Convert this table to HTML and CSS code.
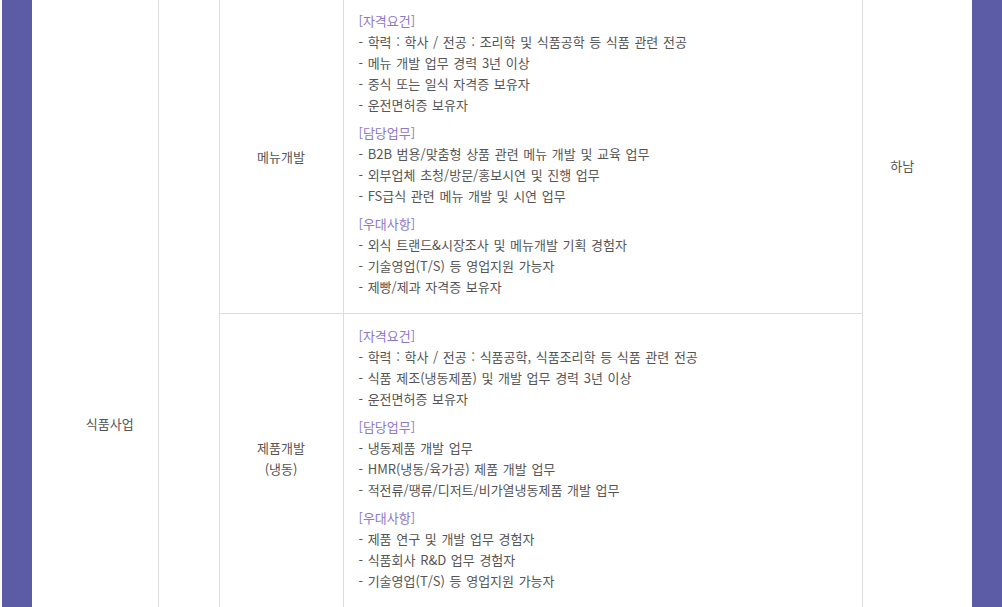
FILE: index.html
```html
<!DOCTYPE html>
<html lang="ko">
<head>
<meta charset="utf-8">
<title>채용</title>
<link rel="stylesheet" href="styles.css">
</head>
<body>
<div class="page">
  <table class="jobs">
    <colgroup>
      <col class="c1"><col class="c2"><col class="c3"><col class="c4"><col class="c5">
    </colgroup>
    <tbody>
      <tr>
        <td class="biz" rowspan="2">식품사업</td>
        <td class="blank" rowspan="2"></td>
        <td class="job">메뉴개발</td>
        <td class="desc first">
          <div class="sec">
            <p class="tit">[자격요건]</p>
            <p>- 학력 : 학사 / 전공 : 조리학 및 식품공학 등 식품 관련 전공</p>
            <p>- 메뉴 개발 업무 경력 3년 이상</p>
            <p>- 중식 또는 일식 자격증 보유자</p>
            <p>- 운전면허증 보유자</p>
          </div>
          <div class="sec">
            <p class="tit">[담당업무]</p>
            <p>- B2B 범용/맞춤형 상품 관련 메뉴 개발 및 교육 업무</p>
            <p>- 외부업체 초청/방문/홍보시연 및 진행 업무</p>
            <p>- FS급식 관련 메뉴 개발 및 시연 업무</p>
          </div>
          <div class="sec">
            <p class="tit">[우대사항]</p>
            <p>- 외식 트랜드&amp;시장조사 및 메뉴개발 기획 경험자</p>
            <p>- 기술영업(T/S) 등 영업지원 가능자</p>
            <p>- 제빵/제과 자격증 보유자</p>
          </div>
        </td>
        <td class="loc" rowspan="2">하남</td>
      </tr>
      <tr>
        <td class="job second">제품개발<br>(냉동)</td>
        <td class="desc">
          <div class="sec">
            <p class="tit">[자격요건]</p>
            <p>- 학력 : 학사 / 전공 : 식품공학, 식품조리학 등 식품 관련 전공</p>
            <p>- 식품 제조(냉동제품) 및 개발 업무 경력 3년 이상</p>
            <p>- 운전면허증 보유자</p>
          </div>
          <div class="sec">
            <p class="tit">[담당업무]</p>
            <p>- 냉동제품 개발 업무</p>
            <p>- HMR(냉동/육가공) 제품 개발 업무</p>
            <p>- 적전류/땡류/디저트/비가열냉동제품 개발 업무</p>
          </div>
          <div class="sec">
            <p class="tit">[우대사항]</p>
            <p>- 제품 연구 및 개발 업무 경험자</p>
            <p>- 식품회사 R&amp;D 업무 경험자</p>
            <p>- 기술영업(T/S) 등 영업지원 가능자</p>
          </div>
        </td>
      </tr>
    </tbody>
  </table>
</div>
</body>
</html>
```

FILE: styles.css
```css
html, body {
  margin: 0;
  padding: 0;
  background: #ffffff;
  overflow: hidden;
}

body {
  font-family: "Noto Sans CJK KR", "Noto Sans", sans-serif;
  font-size: 13px;
  line-height: 21px;
  word-spacing: 1px;
  color: #555555;
}

.page {
  margin-left: 2px;
  width: 940px;
  min-height: 620px;
  border-left: 30px solid #5c5ca6;
  border-right: 30px solid #5c5ca6;
  background: #ffffff;
}

.jobs {
  width: 940px;
  margin-top: -2px;
  border-collapse: collapse;
  table-layout: fixed;
}

.c1 { width: 126px; }
.c2 { width: 61px; }
.c3 { width: 124px; }
.c4 { width: 519px; }
.c5 { width: 110px; }

.jobs td {
  border: 1px solid #dddddd;
  padding: 0;
  text-align: center;
  vertical-align: middle;
}

.jobs tr td:first-child { border-left: none; }
.jobs td.loc { border-right: none; }

.jobs td.biz {
  vertical-align: top;
  padding-top: 414px;
  padding-left: 30px;
}

.jobs td.loc {
  vertical-align: top;
  padding-top: 156px;
  padding-right: 30px;
}

.jobs td.job.second {
  padding-bottom: 8px;
}

.jobs td.desc {
  text-align: left;
  padding: 11px 15px 18px 15px;
}

.jobs td.desc.first {
  padding-bottom: 16px;
}

.sec { margin-bottom: 7px; }
.sec:last-child { margin-bottom: 0; }

.sec p { margin: 0; }

.sec .tit { color: #8d78c9; }
```
